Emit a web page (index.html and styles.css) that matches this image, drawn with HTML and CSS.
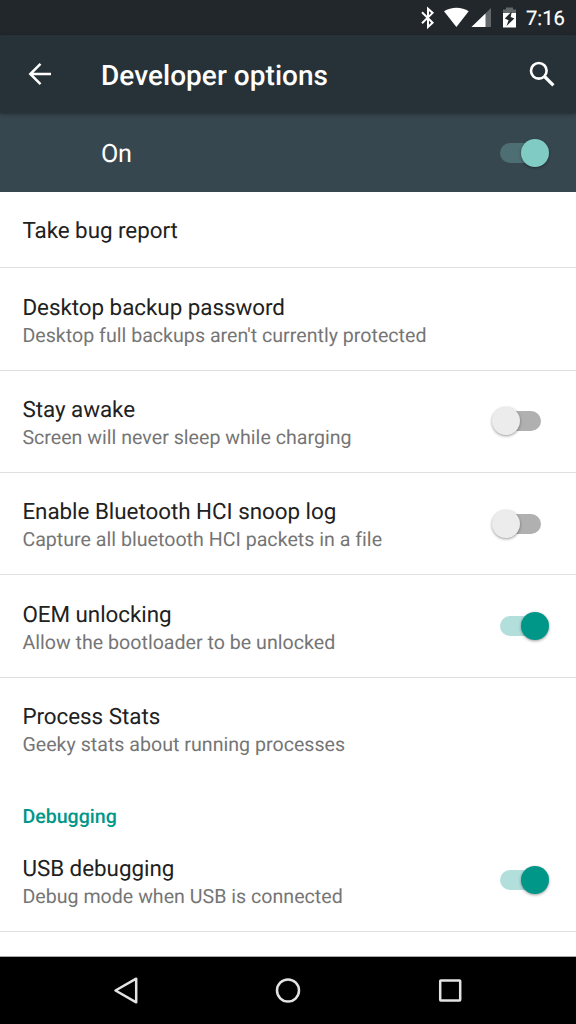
FILE: index.html
```html
<!DOCTYPE html>
<html lang="en">
<head>
<meta charset="utf-8">
<title>Developer options</title>
<link rel="stylesheet" href="styles.css">
</head>
<body>
<div class="screen">
  <div class="status-bar">
    <svg class="status-icons" width="98" height="35" viewBox="0 0 98 35">
      <path d="M2 12.300 12.600 22.700 8 27V8.800L12.600 12.900 2 23.300" fill="none" stroke="#fff" stroke-width="2"/>
      <path d="M24 11.300C31 6.400 42 6.400 48.700 11.300L36.400 27Z" fill="#fff"/>
      <path d="M71 8V27H51.500Z" fill="#63686a"/>
      <path d="M65.500 13.400V27H51.500Z" fill="#fff"/>
      <path d="M83 9.500h3V7.500h7v2h3V15H83Z" fill="#63686a"/>
      <path d="M83 13h13v14.500H83Z" fill="#fff"/>
      <path d="M91.800 11.500 84.800 18.500 88.600 20.300 86.500 26 94.400 18.500 90.700 17Z" fill="#21272b"/>
    </svg>
    <span class="clock">7:16</span>
  </div>
  <header class="app-bar">
    <svg class="back" width="24" height="24" viewBox="0 0 24 24"><path d="M23 12H2.500M12.500 1.800 2.300 12 12.500 22.200" fill="none" stroke="#fff" stroke-width="2.500"/></svg>
    <h1 class="title">Developer options</h1>
    <svg class="search" width="26" height="26" viewBox="0 0 26 26"><circle cx="9.800" cy="9.800" r="7.800" fill="none" stroke="#fff" stroke-width="2.600"/><path d="M15.500 15.500 24.400 24.400" stroke="#fff" stroke-width="3.200"/></svg>
  </header>
  <div class="switch-bar">
    <span class="switch-label">On</span>
    <span class="switch on light"></span>
  </div>
  <main class="list">
    <div class="row single"><div class="name">Take bug report</div></div>
    <div class="row"><div class="text"><div class="name">Desktop backup password</div><div class="summary">Desktop full backups aren't currently protected</div></div></div>
    <div class="row"><div class="text"><div class="name">Stay awake</div><div class="summary">Screen will never sleep while charging</div></div><span class="switch"></span></div>
    <div class="row"><div class="text"><div class="name">Enable Bluetooth HCI snoop log</div><div class="summary">Capture all bluetooth HCI packets in a file</div></div><span class="switch"></span></div>
    <div class="row"><div class="text"><div class="name">OEM unlocking</div><div class="summary">Allow the bootloader to be unlocked</div></div><span class="switch on"></span></div>
    <div class="row last"><div class="text"><div class="name">Process Stats</div><div class="summary">Geeky stats about running processes</div></div></div>
    <h2 class="category">Debugging</h2>
    <div class="row compact"><div class="text"><div class="name">USB debugging</div><div class="summary">Debug mode when USB is connected</div></div><span class="switch on"></span></div>
  </main>
  <nav class="nav-bar">
    <svg width="26" height="28" viewBox="0 0 26 28"><path d="M23.200 1.700V25.300L2.500 13.500Z" fill="none" stroke="#e3e3e3" stroke-width="2.500" stroke-linejoin="round"/></svg>
    <svg width="26" height="28" viewBox="0 0 26 28"><circle cx="13" cy="13.500" r="11" fill="none" stroke="#e3e3e3" stroke-width="2.500"/></svg>
    <svg width="26" height="28" viewBox="0 0 26 28"><rect x="3.200" y="3.400" width="20" height="20" rx=".6" fill="none" stroke="#e3e3e3" stroke-width="2.500"/></svg>
  </nav>
</div>
</body>
</html>
```
FILE: styles.css
```css
* { box-sizing: border-box; }
body { margin: 0; font-family: Roboto, sans-serif; background: #fff; text-rendering: geometricPrecision; font-variant-ligatures: none; }
.screen { width: 576px; height: 1024px; display: flex; flex-direction: column; overflow: hidden; }
.status-bar { height: 35px; flex: none; background: #21272b; display: flex; justify-content: flex-end; padding-right: 10px; }
.status-icons { margin-right: 8px; }
.clock { width: 40px; color: #fff; font-size: 20.200px; line-height: 37px; white-space: nowrap; -webkit-text-stroke: .2px #fff; }
.app-bar { height: 78px; flex: none; background: #263238; display: flex; align-items: center; padding: 0 21px 0 27.500px; box-shadow: 0 1px 4px rgba(0,0,0,.4); z-index: 1; }
.back { margin-right: 49.500px; }
.title { margin: 3px 0 0; flex: 1; color: #fff; font-size: 28px; font-weight: 500; line-height: 34px; letter-spacing: .04px; }
.switch-bar { height: 79px; flex: none; background: #37474f; display: flex; align-items: center; justify-content: space-between; padding: 0 27px 0 101px; }
.switch-label { color: #fff; font-size: 25.200px; line-height: 30px; margin-top: 5px; letter-spacing: -.3px; }
.list { flex: 1; min-height: 0; overflow: hidden; background: #fff; }
.row { height: 102.400px; border-bottom: 1px solid #e0e0e0; display: flex; align-items: center; justify-content: space-between; padding: 0 27px 0 22.400px; }
.row.single { height: 76.200px; padding-top: 3px; }
.row.last { border-bottom: 0; }
.row.last .text { padding-top: 4px; }
.row.compact { height: 102px; }
.text { padding-top: 5.400px; }
.name { color: #212121; font-size: 22.400px; line-height: 28px; letter-spacing: -.03px; }
.summary { color: #757575; font-size: 19.600px; line-height: 28px; letter-spacing: .015px; }
.category { margin: 0; height: 49.800px; padding: 22px 22.400px 0; color: #009688; font-size: 19.600px; line-height: 30px; font-weight: 500; }
.switch { position: relative; width: 57px; height: 28px; flex: none; }
.switch::before { content: ""; position: absolute; left: 8px; top: 4px; width: 41px; height: 20px; border-radius: 10px; background: #b0b0b0; }
.switch::after { content: ""; position: absolute; left: 0; top: 0; width: 28px; height: 28px; border-radius: 50%; background: #ececec; box-shadow: 0 1px 3px rgba(0,0,0,.4); }
.switch.on::before { background: #b2dfdb; }
.switch.on::after { left: 28.500px; background: #009688; }
.switch.light::before { background: #4d6f73; }
.switch.light::after { background: #80cbc4; }
.nav-bar { height: 68px; flex: none; background: #000; border-top: 1px solid #aaa; display: flex; justify-content: space-between; align-items: center; padding: 0 113px; }
```
